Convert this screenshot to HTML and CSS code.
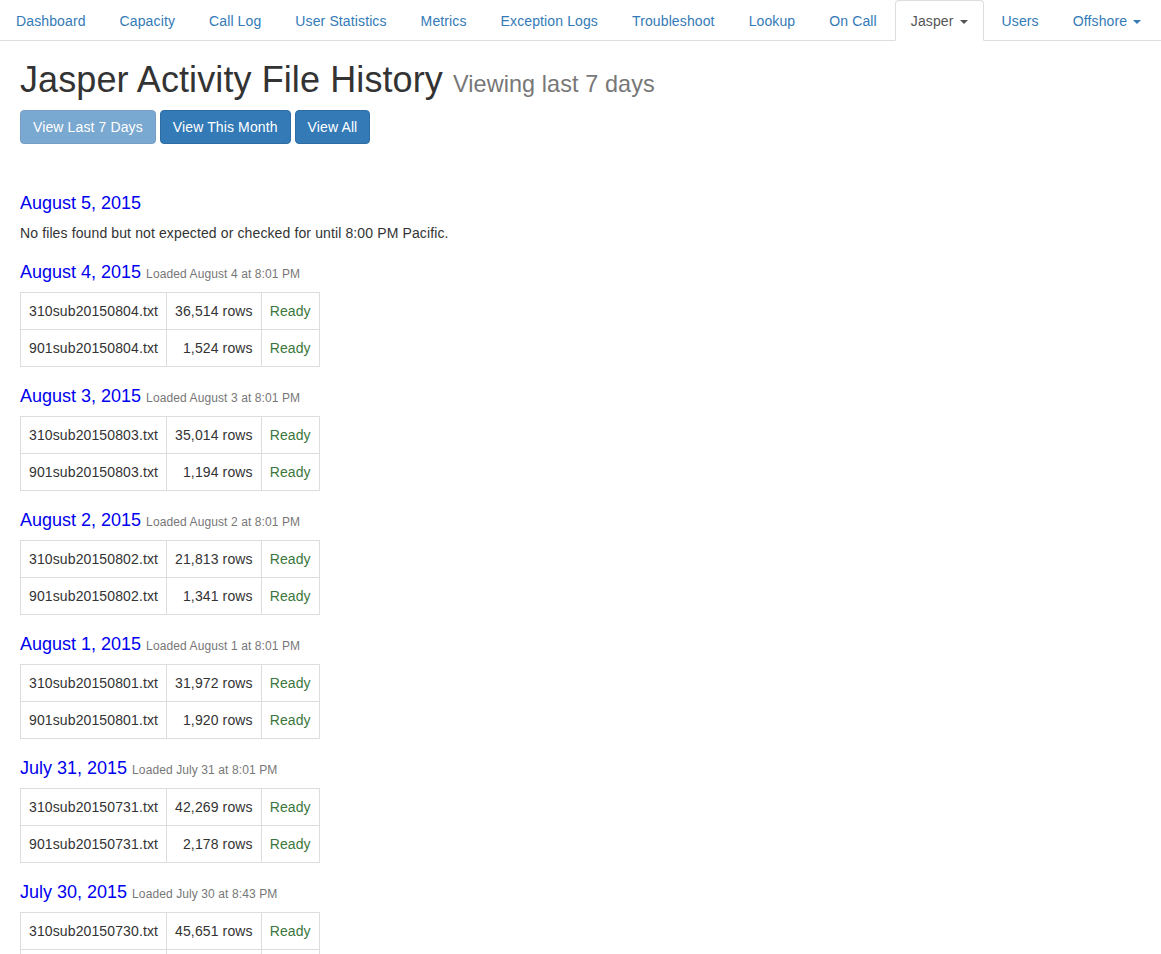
FILE: index.html
```html
<!DOCTYPE html>
<html>
<head>
<meta charset="utf-8">
<title>Jasper Activity File History</title>
<link rel="stylesheet" href="styles.css">
</head>
<body>
<ul class="nav-tabs">
  <li><a href="#">Dashboard</a></li>
  <li><a href="#">Capacity</a></li>
  <li><a href="#">Call Log</a></li>
  <li><a href="#">User Statistics</a></li>
  <li><a href="#">Metrics</a></li>
  <li><a href="#">Exception Logs</a></li>
  <li><a href="#">Troubleshoot</a></li>
  <li><a href="#">Lookup</a></li>
  <li><a href="#">On Call</a></li>
  <li class="active"><a href="#">Jasper <span class="caret"></span></a></li>
  <li><a href="#">Users</a></li>
  <li><a href="#">Offshore <span class="caret"></span></a></li>
</ul>

<div class="content">
  <h1>Jasper Activity File History <small>Viewing last 7 days</small></h1>
  <div class="btn-row">
    <a class="btn disabled" href="#">View Last 7 Days</a>
    <a class="btn" href="#">View This Month</a>
    <a class="btn" href="#">View All</a>
  </div>

  <div class="days">
    <section class="day">
      <h4>August 5, 2015</h4>
      <p class="note">No files found but not expected or checked for until 8:00 PM Pacific.</p>
    </section>

    <section class="day">
      <h4>August 4, 2015 <small>Loaded August 4 at 8:01 PM</small></h4>
      <table class="files">
        <tr><td>310sub20150804.txt</td><td class="num">36,514 rows</td><td class="ok">Ready</td></tr>
        <tr><td>901sub20150804.txt</td><td class="num">1,524 rows</td><td class="ok">Ready</td></tr>
      </table>
    </section>

    <section class="day">
      <h4>August 3, 2015 <small>Loaded August 3 at 8:01 PM</small></h4>
      <table class="files">
        <tr><td>310sub20150803.txt</td><td class="num">35,014 rows</td><td class="ok">Ready</td></tr>
        <tr><td>901sub20150803.txt</td><td class="num">1,194 rows</td><td class="ok">Ready</td></tr>
      </table>
    </section>

    <section class="day">
      <h4>August 2, 2015 <small>Loaded August 2 at 8:01 PM</small></h4>
      <table class="files">
        <tr><td>310sub20150802.txt</td><td class="num">21,813 rows</td><td class="ok">Ready</td></tr>
        <tr><td>901sub20150802.txt</td><td class="num">1,341 rows</td><td class="ok">Ready</td></tr>
      </table>
    </section>

    <section class="day">
      <h4>August 1, 2015 <small>Loaded August 1 at 8:01 PM</small></h4>
      <table class="files">
        <tr><td>310sub20150801.txt</td><td class="num">31,972 rows</td><td class="ok">Ready</td></tr>
        <tr><td>901sub20150801.txt</td><td class="num">1,920 rows</td><td class="ok">Ready</td></tr>
      </table>
    </section>

    <section class="day">
      <h4>July 31, 2015 <small>Loaded July 31 at 8:01 PM</small></h4>
      <table class="files">
        <tr><td>310sub20150731.txt</td><td class="num">42,269 rows</td><td class="ok">Ready</td></tr>
        <tr><td>901sub20150731.txt</td><td class="num">2,178 rows</td><td class="ok">Ready</td></tr>
      </table>
    </section>

    <section class="day">
      <h4>July 30, 2015 <small>Loaded July 30 at 8:43 PM</small></h4>
      <table class="files">
        <tr><td>310sub20150730.txt</td><td class="num">45,651 rows</td><td class="ok">Ready</td></tr>
        <tr><td>901sub20150730.txt</td><td class="num">1,602 rows</td><td class="ok">Ready</td></tr>
      </table>
    </section>
  </div>
</div>
</body>
</html>
```

FILE: styles.css
```css
* { box-sizing: border-box; }

html, body {
  margin: 0;
  padding: 0;
  background: #fff;
}

body {
  font-family: "Liberation Sans", Arial, Helvetica, sans-serif;
  font-size: 14px;
  line-height: 20px;
  letter-spacing: 0.12px;
  color: #333;
}

a { text-decoration: none; }

/* nav tabs */
.nav-tabs {
  list-style: none;
  margin: 0;
  padding: 0;
  display: flex;
  border-bottom: 1px solid #ddd;
}

.nav-tabs li {
  margin-bottom: -1px;
}

.nav-tabs li a {
  display: block;
  margin-right: 2px;
  padding: 10px 15px 9px;
  line-height: 20px;
  color: #337ab7;
  border: 1px solid transparent;
  border-radius: 4px 4px 0 0;
}

.nav-tabs li.active a {
  color: #555;
  background: #fff;
  border-color: #ddd #ddd transparent;
}

.caret {
  display: inline-block;
  width: 0;
  height: 0;
  margin-left: 2px;
  vertical-align: middle;
  border-top: 4px solid;
  border-left: 4px solid transparent;
  border-right: 4px solid transparent;
}

/* content */
.content {
  padding: 0 20px;
}

h1 {
  margin: 19px 0 10px;
  font-size: 36px;
  font-weight: 500;
  line-height: 1.1;
  letter-spacing: 0.1px;
  color: #333;
}

h1 small {
  font-size: 65%;
  font-weight: 400;
  color: #777;
}

.btn-row {
  display: flex;
  gap: 4px;
}

.btn {
  display: inline-block;
  padding: 6px 12px;
  font-size: 14px;
  line-height: 20px;
  color: #fff;
  background: #337ab7;
  border: 1px solid #2e6da4;
  border-radius: 4px;
}

.btn.disabled {
  opacity: .65;
}

.days {
  margin-top: 49px;
}

.day h4 {
  margin: 0 0 10px;
  font-size: 18px;
  font-weight: 400;
  line-height: 20px;
  letter-spacing: 0;
  color: #0000ee;
}

.day h4 small {
  font-size: 12px;
  line-height: 1;
  letter-spacing: 0.1px;
  color: #777;
}

.note {
  margin: 0 0 19px;
}

.files {
  border-collapse: collapse;
  margin-bottom: 19px;
}

.files td {
  padding: 8px;
  border: 1px solid #ddd;
  line-height: 20px;
  vertical-align: top;
}

.files td.num {
  text-align: right;
}

.files td.ok {
  color: #3c763d;
}
```
